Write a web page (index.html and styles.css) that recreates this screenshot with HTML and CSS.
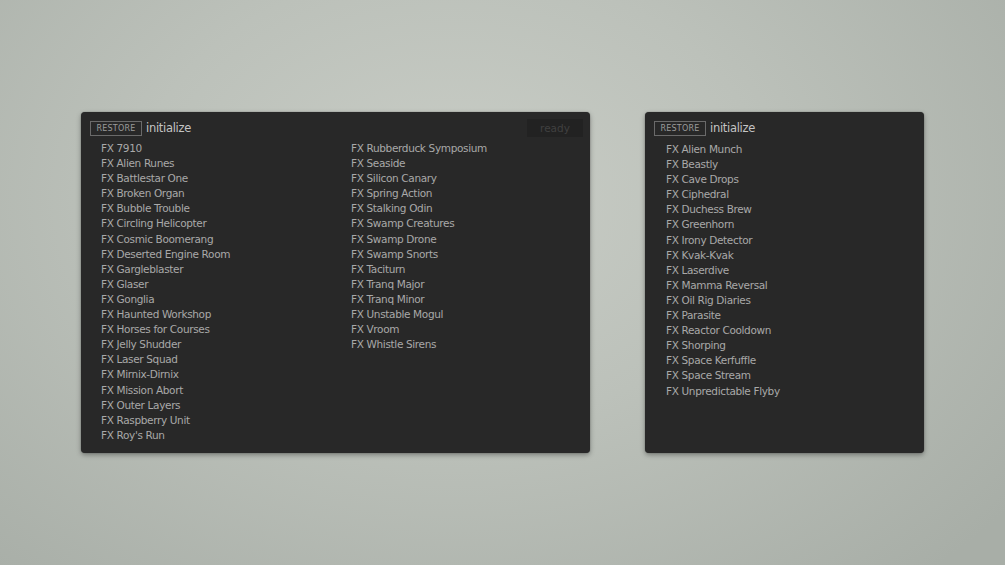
FILE: index.html
```html
<!DOCTYPE html>
<html>
<head>
<meta charset="utf-8">
<link rel="stylesheet" href="styles.css">
</head>
<body>
<div class="stage">
  <div class="panel panel-wide">
    <div class="head">
      <span class="restore">RESTORE</span>
      <span class="title">initialize</span>
      <span class="ready">ready</span>
    </div>
    <div class="cols">
      <ul class="list">
        <li>FX 7910</li>
        <li>FX Alien Runes</li>
        <li>FX Battlestar One</li>
        <li>FX Broken Organ</li>
        <li>FX Bubble Trouble</li>
        <li>FX Circling Helicopter</li>
        <li>FX Cosmic Boomerang</li>
        <li>FX Deserted Engine Room</li>
        <li>FX Gargleblaster</li>
        <li>FX Glaser</li>
        <li>FX Gonglia</li>
        <li>FX Haunted Workshop</li>
        <li>FX Horses for Courses</li>
        <li>FX Jelly Shudder</li>
        <li>FX Laser Squad</li>
        <li>FX Mirnix-Dirnix</li>
        <li>FX Mission Abort</li>
        <li>FX Outer Layers</li>
        <li>FX Raspberry Unit</li>
        <li>FX Roy's Run</li>
      </ul>
      <ul class="list">
        <li>FX Rubberduck Symposium</li>
        <li>FX Seaside</li>
        <li>FX Silicon Canary</li>
        <li>FX Spring Action</li>
        <li>FX Stalking Odin</li>
        <li>FX Swamp Creatures</li>
        <li>FX Swamp Drone</li>
        <li>FX Swamp Snorts</li>
        <li>FX Taciturn</li>
        <li>FX Tranq Major</li>
        <li>FX Tranq Minor</li>
        <li>FX Unstable Mogul</li>
        <li>FX Vroom</li>
        <li>FX Whistle Sirens</li>
      </ul>
    </div>
  </div>
  <div class="panel panel-narrow">
    <div class="head">
      <span class="restore">RESTORE</span>
      <span class="title">initialize</span>
    </div>
    <div class="cols">
      <ul class="list">
        <li>FX Alien Munch</li>
        <li>FX Beastly</li>
        <li>FX Cave Drops</li>
        <li>FX Ciphedral</li>
        <li>FX Duchess Brew</li>
        <li>FX Greenhorn</li>
        <li>FX Irony Detector</li>
        <li>FX Kvak-Kvak</li>
        <li>FX Laserdive</li>
        <li>FX Mamma Reversal</li>
        <li>FX Oil Rig Diaries</li>
        <li>FX Parasite</li>
        <li>FX Reactor Cooldown</li>
        <li>FX Shorping</li>
        <li>FX Space Kerfuffle</li>
        <li>FX Space Stream</li>
        <li>FX Unpredictable Flyby</li>
      </ul>
    </div>
  </div>
</div>
</body>
</html>
```
FILE: styles.css
```css
html, body {
  margin: 0;
  padding: 0;
  width: 1005px;
  height: 565px;
  overflow: hidden;
}
body {
  background: radial-gradient(ellipse 70% 90% at 45% 35%, #c9cdc6 0%, #bcc1ba 45%, #a8aea7 100%);
  font-family: "DejaVu Sans", Verdana, sans-serif;
}
.stage {
  display: flex;
  align-items: flex-start;
  gap: 55px;
  padding: 112px 0 0 81px;
}
.panel {
  box-sizing: border-box;
  height: 341px;
  background: #282828;
  border-radius: 4px;
  box-shadow: 0 2px 5px rgba(0,0,0,0.35), 0 0 1px rgba(0,0,0,0.5);
  flex-shrink: 0;
}
.panel-wide { width: 509px; padding: 7px 7px 0 9px; }
.panel-narrow { width: 279px; padding: 7px 7px 0 9px; }
.head {
  display: flex;
  align-items: center;
  height: 18px;
}
.restore {
  box-sizing: border-box;
  width: 52px;
  height: 15px;
  border: 1px solid #6a6a6a;
  color: #9a9a9a;
  font-size: 8px;
  line-height: 13px;
  text-align: center;
  letter-spacing: 0.2px;
}
.title {
  margin-left: 4px;
  color: #c4c4c4;
  font-size: 11.5px;
  letter-spacing: -0.3px;
}
.ready {
  margin-left: auto;
  width: 56px;
  height: 18px;
  background: #222222;
  color: #404040;
  font-size: 10.5px;
  line-height: 18px;
  text-align: center;
}
.cols {
  display: flex;
  padding-left: 11px;
  margin-top: 4px;
}
.panel-narrow .cols {
  padding-left: 12px;
  margin-top: 5px;
}
.list {
  list-style: none;
  margin: 0;
  padding: 0;
  width: 250px;
  flex-shrink: 0;
}
.list li {
  color: #a9a9a9;
  font-size: 10.5px;
  letter-spacing: -0.35px;
  line-height: 15.1px;
  white-space: nowrap;
}
```
